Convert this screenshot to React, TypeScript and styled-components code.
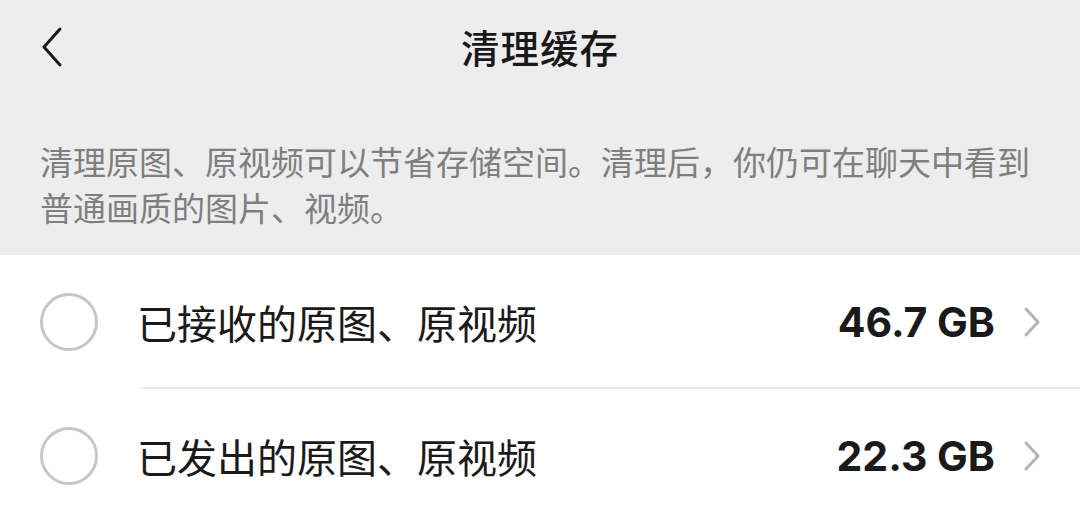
import styled, { createGlobalStyle } from "styled-components";

const GlobalStyle = createGlobalStyle`
  html, body {
    margin: 0;
    padding: 0;
    background: #ffffff;
  }
  body {
    font-family: "Noto Sans CJK SC", "Noto Sans", sans-serif;
    -webkit-font-smoothing: antialiased;
  }
`;

const Page = styled.div`
  width: 1080px;
  height: 520px;
  overflow: hidden;
  background: #ffffff;
`;

const Top = styled.div`
  background: #ededed;
`;

const Header = styled.div`
  height: 92px;
  display: flex;
  align-items: center;
  justify-content: center;
  position: relative;
`;

const BackButton = styled.button`
  position: absolute;
  left: 34px;
  top: 24px;
  width: 36px;
  height: 46px;
  padding: 0;
  border: none;
  background: transparent;
  display: flex;
  align-items: center;
  justify-content: center;
`;

const Title = styled.h1`
  margin: 0;
  font-size: 38.5px;
  font-weight: 500;
  color: #191919;
  letter-spacing: 1px;
`;

const Description = styled.p`
  margin: 0;
  padding: 46px 20px 25px 40px;
  font-size: 33px;
  line-height: 46px;
  color: #7f7f7f;
`;

const List = styled.div`
  background: #ffffff;
`;

const Row = styled.div<{ $divider?: boolean }>`
  height: 134px;
  display: flex;
  align-items: center;
  position: relative;

  &::after {
    content: "";
    display: ${(p) => (p.$divider ? "block" : "none")};
    position: absolute;
    left: 140px;
    right: 0;
    bottom: 0;
    height: 2px;
    background: #ececec;
  }
`;

const Radio = styled.span`
  width: 52px;
  height: 52px;
  margin-left: 40px;
  border: 3px solid #c6c6c6;
  border-radius: 50%;
  flex-shrink: 0;
`;

const Label = styled.span`
  margin-left: 39px;
  flex: 1;
  font-size: 40px;
  color: #1a1a1a;
`;

const Size = styled.span`
  font-family: "Inter", "Liberation Sans", sans-serif;
  font-weight: 700;
  font-size: 41px;
  color: #1a1a1a;
`;

const Chevron = styled.svg`
  margin-left: 27px;
  margin-right: 38px;
  width: 20px;
  height: 32px;
`;

const items = [
  { label: "已接收的原图、原视频", size: "46.7 GB" },
  { label: "已发出的原图、原视频", size: "22.3 GB" },
];

export default function App() {
  return (
    <Page>
      <GlobalStyle />
      <Top>
        <Header>
          <BackButton aria-label="返回">
            <svg width="26" height="42" viewBox="0 0 26 42">
              <path d="M21 3 L5 21 L21 39" fill="none" stroke="#1a1a1a" strokeWidth="3" strokeLinecap="round" strokeLinejoin="round" />
            </svg>
          </BackButton>
          <Title>清理缓存</Title>
        </Header>
        <Description>
          清理原图、原视频可以节省存储空间。清理后，你仍可在聊天中看到普通画质的图片、视频。
        </Description>
      </Top>
      <List>
        {items.map((item, i) => (
          <Row key={item.label} $divider={i < items.length - 1}>
            <Radio />
            <Label>{item.label}</Label>
            <Size>{item.size}</Size>
            <Chevron viewBox="0 0 20 32">
              <path d="M4 3 L16 16 L4 29" fill="none" stroke="#b4b4b4" strokeWidth="3" strokeLinecap="round" strokeLinejoin="round" />
            </Chevron>
          </Row>
        ))}
      </List>
    </Page>
  );
}
